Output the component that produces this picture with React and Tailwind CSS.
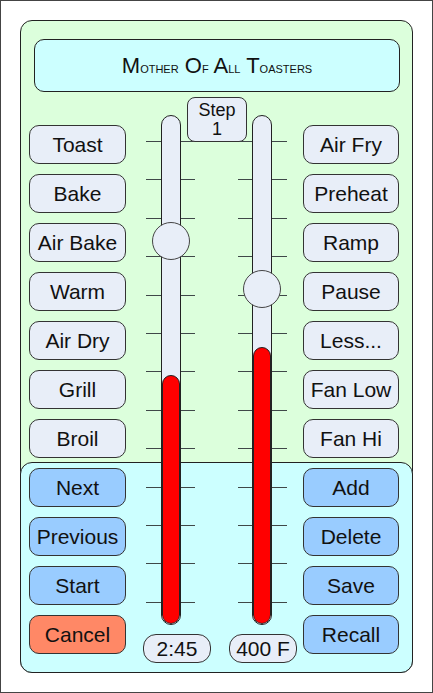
import React from 'react';

const font = { fontFamily: '"Liberation Sans", Arial, sans-serif' };

const leftItems = [
  { label: 'Toast', kind: 'mode' },
  { label: 'Bake', kind: 'mode' },
  { label: 'Air Bake', kind: 'mode' },
  { label: 'Warm', kind: 'mode' },
  { label: 'Air Dry', kind: 'mode' },
  { label: 'Grill', kind: 'mode' },
  { label: 'Broil', kind: 'mode' },
  { label: 'Next', kind: 'action' },
  { label: 'Previous', kind: 'action' },
  { label: 'Start', kind: 'action' },
  { label: 'Cancel', kind: 'cancel' },
];

const rightItems = [
  { label: 'Air Fry', kind: 'mode' },
  { label: 'Preheat', kind: 'mode' },
  { label: 'Ramp', kind: 'mode' },
  { label: 'Pause', kind: 'mode' },
  { label: 'Less...', kind: 'mode' },
  { label: 'Fan Low', kind: 'mode' },
  { label: 'Fan Hi', kind: 'mode' },
  { label: 'Add', kind: 'action' },
  { label: 'Delete', kind: 'action' },
  { label: 'Save', kind: 'action' },
  { label: 'Recall', kind: 'action' },
];

const kindClass = {
  mode: 'bg-[#e8eef8]',
  action: 'bg-[#99ccff]',
  cancel: 'bg-[#ff8866]',
};

const ticks = Array.from({ length: 13 }, (_, i) => i);

function Button({ label, kind }) {
  return (
    <button
      className={`h-[39px] w-full rounded-[10px] border border-[#333] text-[21px] leading-none text-[#111] flex items-center justify-center ${kindClass[kind]}`}
    >
      {label}
    </button>
  );
}

function Slider({ fill, knobTop, trackLeft, knobLeft }) {
  return (
    <div className="relative w-[49px] h-[510px]">
      {/* tick marks */}
      <div className="absolute left-0 right-0 top-[26px] h-[462px] flex flex-col justify-between">
        {ticks.map((i) => (
          <div key={i} className="h-px bg-[#3f4848]" />
        ))}
      </div>
      {/* track + fill */}
      <div
        className="absolute top-0 w-[20px] h-full rounded-full border border-[#222] bg-[#e8eef8] overflow-hidden flex flex-col justify-end"
        style={{ left: trackLeft }}
      >
        <div className="w-full rounded-full border border-[#222] bg-[#ff0000]" style={{ height: fill }} />
      </div>
      {/* knob */}
      <div
        className="absolute w-[38px] h-[38px] rounded-full border border-[#444] bg-[#e8eef8]"
        style={{ top: knobTop, left: knobLeft }}
      />
    </div>
  );
}

function Title() {
  const big = 'text-[22px]';
  const small = 'text-[11px]';
  return (
    <div className="mt-[18px] ml-[13px] w-[366px] h-[53px] rounded-[10px] border border-[#222] bg-[#ccffff] flex items-center justify-center text-[#111] leading-none">
      <span className="whitespace-pre">
        <span className={big}>M</span>
        <span className={small}>OTHER</span>
        <span className={big}> O</span>
        <span className={small}>F</span>
        <span className={big}> A</span>
        <span className={small}>LL</span>
        <span className={big}> T</span>
        <span className={small}>OASTERS</span>
      </span>
    </div>
  );
}

export default function App() {
  return (
    <div className="w-[433px] h-[693px] bg-white border border-[#444] p-[19px]" style={font}>
      <div className="relative w-[393px] h-[653px] rounded-[12px] border border-[#222] bg-[#dcffdc]">
        {/* lower control area backdrop */}
        <div className="absolute left-[-1px] right-[-1px] bottom-[-1px] h-[211px] rounded-[12px] border border-[#222] bg-[#ccffff]" />

        <div className="relative flex flex-col">
          <Title />

          <div className="mt-[5px] flex items-start">
            <div className="ml-[8px] w-[97px] pt-[28px] flex flex-col gap-[10px]">
              {leftItems.map((b) => (
                <Button key={b.label} {...b} />
              ))}
            </div>

            <div className="relative ml-[17px] w-[154px] flex flex-col">
              <div className="mt-[18px] pl-[3px] flex gap-[43px]">
                <Slider fill={249} knobTop={107} trackLeft={15} knobLeft={6} />
                <Slider fill={277} knobTop={155} trackLeft={14} knobLeft={5} />
              </div>
              <div className="absolute top-0 left-[44px] w-[60px] h-[45px] rounded-[8px] border border-[#333] bg-[#e8eef8] flex flex-col items-center justify-center text-[18px] leading-[19px] text-[#111]">
                <span>Step</span>
                <span>1</span>
              </div>
              <div className="mt-[9px] flex gap-[18px]">
                <div className="w-[68px] h-[29px] rounded-[13px] border border-[#333] bg-[#e8eef8] flex items-center justify-center text-[21px] leading-none text-[#111]">
                  2:45
                </div>
                <div className="w-[68px] h-[29px] rounded-[13px] border border-[#333] bg-[#e8eef8] flex items-center justify-center text-[21px] leading-none text-[#111]">
                  400 F
                </div>
              </div>
            </div>

            <div className="ml-[6px] w-[96px] pt-[28px] flex flex-col gap-[10px]">
              {rightItems.map((b) => (
                <Button key={b.label} {...b} />
              ))}
            </div>
          </div>
        </div>
      </div>
    </div>
  );
}
